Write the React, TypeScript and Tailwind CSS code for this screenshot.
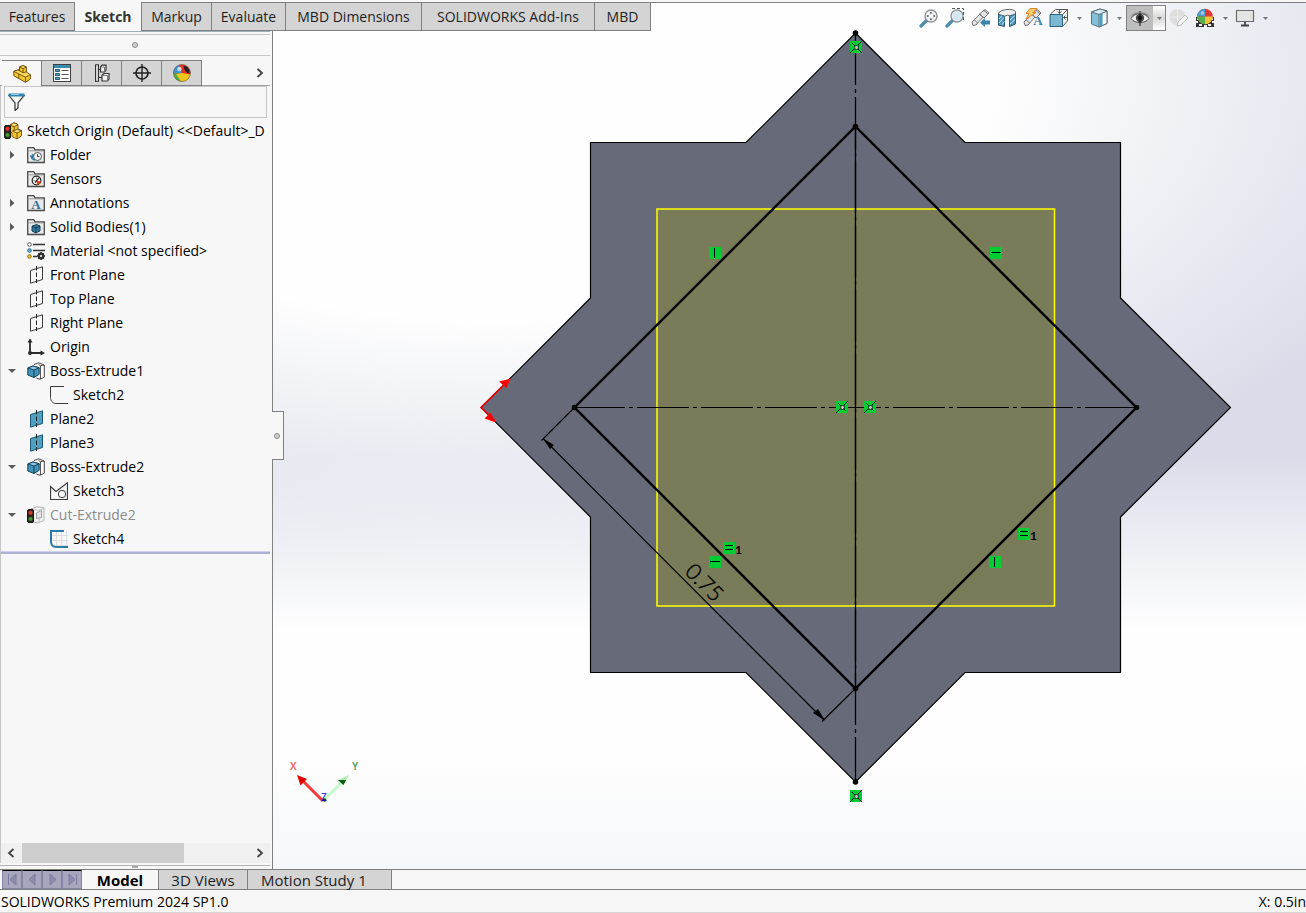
import React from 'react';
import clsx from 'clsx';

type IconProps = { children: React.ReactNode; size?: 18 | 20 };

function Icon({ children, size = 18 }: IconProps) {
  return (
    <svg
      width={size}
      height={size}
      viewBox={`0 0 ${size} ${size}`}
      fill="none"
      className="shrink-0"
      aria-hidden="true"
    >
      {children}
    </svg>
  );
}

/* ---------- Feature tree icons ---------- */

function TrafficLight() {
  return (
    <g>
      <rect x="0.5" y="3.5" width="6" height="13" rx="1.5" fill="#2b2320" stroke="#1c1714" />
      <circle cx="3.5" cy="6.8" r="2.1" fill="#e0352b" />
      <circle cx="3.5" cy="13" r="2.1" fill="#3f9a34" />
    </g>
  );
}

function PartIcon() {
  return (
    <Icon>
      <g stroke="#6b4a0c" strokeWidth="0.9" strokeLinejoin="round">
        <path d="M6.500 2 10 .6l3.400 1.500v6l4 1.700V14l-4.900 3.300L.8 10.800V6.400l5.700-2z" fill="#f2c62c" />
        <path d="M6.500 2 10 .6l3.400 1.500L10 3.600z" fill="#fde37c" />
        <path d="M.8 6.400 4.800 5l5.200 2.600 3.400-.6 4 2.800-4.900 2.400z" fill="#fbdc62" />
        <path d="M10 3.600v4M6.500 2v4M12.500 12.200v5M5.800 9v4.400" />
      </g>
    </Icon>
  );
}

function RootIcon() {
  return (
    <Icon>
      <g stroke="#6b4a0c" strokeWidth="0.9" strokeLinejoin="round">
        <path d="M6 3 10 .8l4 1.8v4.600l3.500 1.400v5.200L13 17l-5-2.400V11L6 9z" fill="#f2c62c" />
        <path d="M6 3 10 .8l4 1.800-3.800 2zM8.500 9l4.800-1.600 4.200 1.400L13 11z" fill="#fde37c" />
        <path d="M10.200 4.600V8.400M13 11v6" />
      </g>
      <TrafficLight />
    </Icon>
  );
}

function FolderBase({ children }: { children: React.ReactNode }) {
  return (
    <Icon>
      <path d="M.7 16.500V1.700h6l1.600 2.300h9v12.500z" fill="#e9e9e9" stroke="#4a4a4a" strokeWidth="1.300" />
      <path d="M1.500 4.800h15" stroke="#9a9a9a" />
      {children}
    </Icon>
  );
}

function HistoryFolderIcon() {
  return (
    <FolderBase>
      <circle cx="10.500" cy="10.500" r="4" fill="#f5f5f5" stroke="#555" />
      <path d="M10.500 8.200v2.500h2" stroke="#333" />
      <path d="M7.800 14.200C4.800 13 4.300 11 6 8.200" stroke="#2f7fa8" strokeWidth="1.600" />
      <path d="M2.500 9.600h4.800L4.900 13.200z" fill="#2f7fa8" />
    </FolderBase>
  );
}

function SensorsIcon() {
  return (
    <FolderBase>
      <circle cx="9.500" cy="10.500" r="4.300" fill="#fff" stroke="#222" strokeWidth="1.200" />
      <path d="M9.500 10.500 14 11.500A4.300 4.300 0 0 1 10 15z" fill="#e0441f" />
      <path d="M8 12.500 12 7.800" stroke="#222" strokeWidth="1.300" />
      <path d="M6.500 10.500h1M9.500 7.500v1" stroke="#444" />
    </FolderBase>
  );
}

function AnnotationsIcon() {
  return (
    <FolderBase>
      <text
        x="9"
        y="15"
        textAnchor="middle"
        fill="#2d7093"
        className="text-[13px] font-bold font-['Liberation_Serif',serif]"
      >
        A
      </text>
    </FolderBase>
  );
}

function SolidBodiesIcon() {
  return (
    <FolderBase>
      <path d="M5 8.200 9.500 6.500 13 8v4.800L8.800 15 5 13z" fill="#2d7ea5" stroke="#16394b" />
      <path d="m5 8.200 4 1.600L13 8M9 9.800V15" stroke="#16394b" />
    </FolderBase>
  );
}

function MaterialIcon() {
  return (
    <Icon>
      <path d="M6 2.500h12M6 8.500h12M6 14.500h4" stroke="#333" strokeWidth="1.600" />
      <circle cx="2.500" cy="2.500" r="1.800" fill="#fff" stroke="#555" />
      <circle cx="2.500" cy="8.500" r="1.800" fill="#5fb4dd" stroke="#27688c" />
      <circle cx="2.500" cy="14.500" r="1.800" fill="#f4c822" stroke="#8a6a12" />
      <circle cx="14" cy="14" r="2.300" stroke="#333" strokeWidth="2.400" fill="#f7f7f7" />
      <path d="M14 10v1.500M14 16.500V18M10 14h1.500M16.500 14H18M11.300 11.300l1 1M15.700 15.700l1 1M16.700 11.300l-1 1M12.300 15.700l-1 1" stroke="#333" strokeWidth="1.500" />
    </Icon>
  );
}

function PlaneIcon({ solid = false }: { solid?: boolean }) {
  return (
    <Icon>
      <path
        d="M3.500 4.500 15.500.8v12.700L3.500 17.200z"
        fill={solid ? '#4f9fc2' : '#f9f9f9'}
        stroke={solid ? '#1d5876' : '#3c3c3c'}
      />
      <path d="M9.500 0v4.500M9.500 6.500v4.500M9.500 13v4" stroke="#222" />
    </Icon>
  );
}

function OriginIcon() {
  return (
    <Icon>
      <path d="M3 15V3M3 15h12" stroke="#2b2b2b" strokeWidth="1.800" />
      <path d="M.5 4.500 3 .2l2.500 4.300zM13.500 12.500 18 15l-4.500 2.500z" fill="#2b2b2b" />
      <circle cx="3" cy="15" r="2" fill="#2b2b2b" />
    </Icon>
  );
}

function BossIcon() {
  return (
    <Icon>
      <path d="M7 2.500 11.500.8 17.300 3v12.200L13 17.300 9.500 16" fill="#fafafa" stroke="#444" />
      <path d="m11.500 2.500 2 1.200V17M13.500 3.700 17 3" stroke="#555" />
      <path d="M.8 6 6 4l6.200 1.800v6.500L7 15.500.8 13z" fill="#3f93b8" stroke="#17435a" />
      <path d="M.8 6 7 8l5.200-2.200L6 4z" fill="#8bc8e2" stroke="#17435a" />
      <path d="M7 8v7.500" stroke="#17435a" />
    </Icon>
  );
}

function CutIcon() {
  return (
    <Icon>
      <path d="M4 3 10 .8l7 .7v13L11 17l-6-1z" fill="#f1f1f1" stroke="#b4b4b4" />
      <path d="m5 3.500 7 1V16M12 4.500 17 2" stroke="#c4c4c4" />
      <path d="M9.500 7 14.500 4.500v7l-5 1z" fill="#e4e4e4" stroke="#a5a5a5" />
      <TrafficLight />
    </Icon>
  );
}

function SketchArcIcon() {
  return (
    <Icon>
      <path d="M14 .5H.5v11c0 3 2 6 5.500 6h12" stroke="#3c3c3c" />
    </Icon>
  );
}

function SketchShapeIcon() {
  return (
    <Icon>
      <path d="M.5 17.500V4.500l5.500 5L17.500.8v16.700z" stroke="#3c3c3c" strokeWidth="1.200" />
      <circle cx="12" cy="12" r="3.700" fill="#f7f7f7" stroke="#3c3c3c" />
    </Icon>
  );
}

function SketchGridIcon() {
  return (
    <Icon>
      <path d="M6.500 1v17M11.500 1v17M16.500 1v17M2 5.500h16M2 10.500h16M2 15.500h16" stroke="#dedede" />
      <path d="M14 1H1v10.500C1 15 3 17 6.500 17H18" stroke="#2b7ca5" strokeWidth="2" />
    </Icon>
  );
}

/* ---------- Manager tab icons ---------- */

function PropertyIcon() {
  return (
    <Icon>
      <rect x="0.500" y="0.500" width="17" height="17" fill="#fff" stroke="#3f3f3f" />
      <path d="M1 1h16v3H1z" fill="#3a8bb1" />
      <path d="M2.500 5.500h4v2h-4zM2.500 9.500h4v2h-4zM2.500 13.500h4v2h-4z" fill="#5ea9ca" stroke="#245a75" />
      <path d="M8.500 6.500h7M8.500 10.500h7M8.500 14.500h7" stroke="#555" />
    </Icon>
  );
}

function ConfigIcon() {
  return (
    <Icon>
      <path d="M2.500 1v16.500M5.500 1v16.500M2 .8h4M2 17.300h4M5.500 5.500H8M5.500 13.500H9" stroke="#333" />
      <path d="M7.500 3 9 1.200h4V6L11.500 8h-4zM9 11.500l2-2h5v5.500L14.500 17H9z" fill="#f4f4f4" stroke="#333" strokeWidth="1.200" />
      <path d="M7.500 3h4v5M9 11.500h5.500V17" stroke="#777" />
    </Icon>
  );
}

function TargetIcon() {
  return (
    <Icon>
      <circle cx="9" cy="9" r="6" stroke="#222" strokeWidth="1.700" />
      <path d="M9 0v18M0 9h18" stroke="#222" strokeWidth="1.400" />
    </Icon>
  );
}

function BallIcon() {
  return (
    <Icon>
      <circle cx="9" cy="9" r="8.500" fill="#e23024" />
      <path d="M9 9 6 1A8.500 8.500 0 0 0 .5 9.500z" fill="#4291d6" />
      <path d="M.5 9.500 9 9v8.500A8.500 8.500 0 0 1 .5 9.500z" fill="#4cae3a" />
      <path d="M3 10 9 9l8.500 1.500A8.500 8.500 0 0 1 8 17.500z" fill="#f3c61c" />
      <path d="M10.500 2C14 1.500 17 5 16.500 9.500 13.500 9 11 6 10.500 2z" fill="#222" />
      <circle cx="6.500" cy="5" r="2.200" fill="#fff" opacity="0.700" />
      <circle cx="9" cy="9" r="8.500" stroke="#6a5a4a" strokeWidth="0.600" />
    </Icon>
  );
}

function FilterIcon() {
  return (
    <Icon>
      <path d="M1 2.500 7 10v7.500l3-2.500v-5L16 2.500z" fill="#f7f7f7" stroke="#333" strokeWidth="1.200" />
      <path d="M.5.500h16v3H.5z" fill="#2f86ae" />
      <path d="M3 1.500h8" stroke="#8fcbe6" />
    </Icon>
  );
}

/* ---------- Heads-up toolbar icons ---------- */

function Lens({ children }: { children?: React.ReactNode }) {
  return (
    <g>
      <path d="M2 18 7.500 12.500" stroke="#4b8dad" strokeWidth="3.200" strokeLinecap="round" />
      <circle cx="12" cy="8" r="6" fill="#f6f9fb" stroke="#8b9298" strokeWidth="1.400" />
      {children}
    </g>
  );
}

function ZoomFitIcon() {
  return (
    <Icon size={20}>
      <Lens>
        <path d="m12 3.500 1.600 2h-3.200zM12 12.500l1.600-2h-3.200zM7.500 8l2-1.600v3.200zM16.500 8l-2-1.600v3.200z" fill="#4b4b4b" />
      </Lens>
    </Icon>
  );
}

function ZoomAreaIcon() {
  return (
    <Icon size={20}>
      <path d="M7 .5h11.500v12" stroke="#555" strokeDasharray="3 2" />
      <Lens>
        <circle cx="12" cy="8" r="4.800" fill="#d5e7f0" />
      </Lens>
    </Icon>
  );
}

function Scope() {
  return (
    <g stroke="#777" strokeLinejoin="round">
      <path d="m1 14 8-8 3 3-7 8-3 .5zM8.500 6 14 1.500l4 3.500-5 5z" fill="#e5e5e5" />
      <path d="m3.500 12 3 3M8.500 6l4.500 4M13 2.500l4 3.500" />
    </g>
  );
}

function PreviousViewIcon() {
  return (
    <Icon size={20}>
      <Scope />
      <path d="m9 14.500 5-4.500v2.500h5v4h-5V19z" fill="#3d86ab" />
    </Icon>
  );
}

function SectionIcon() {
  return (
    <Icon size={20}>
      <path d="M1.500 5C4 1 16 0 18.500 3.500V15l-5 3V8.500C12 7 9 7 7.500 8.500V18l-6-1z" fill="#ededed" stroke="#666" />
      <path d="M1.500 6.500 7.500 8v10.500l-6-1.500zM12.500 8l6-2v10l-6 2.500z" fill="#5298b9" stroke="#2e5e76" />
      <path d="m2 11 3-3.500M2 15l5-5.500M4.500 17l3-3.500M13 12l5-4.500M13 16l5-4.500" stroke="#bfe0ee" />
    </Icon>
  );
}

function DynamicAnnotationIcon() {
  return (
    <Icon size={20}>
      <Scope />
      <path d="M7 .5h7l-4 4h3L3 11l3-5.500H3z" fill="#f9cf6a" stroke="#e0862e" />
      <text
        x="15"
        y="17"
        textAnchor="middle"
        fill="#3b83a8"
        className="text-[13px] font-bold leading-none font-['Liberation_Serif',serif]"
      >
        A
      </text>
    </Icon>
  );
}

function OrientationIcon() {
  return (
    <Icon size={20}>
      <path d="M1.500 6 6.500 1.500h12V13l-5 5.500" fill="#f5f5f5" stroke="#555" />
      <path d="M1 6.500h12.500v12H1z" fill="#7ab8d3" stroke="#2a627e" />
      <path d="m13.500 6.500 5-5M10.500 1.500V5M8.500 3.500l2 2 2-2M15 9.500h3.500M16.500 7.500l-2 2 2 2" stroke="#555" />
    </Icon>
  );
}

function DisplayStyleIcon() {
  return (
    <Icon size={20}>
      <path d="M2.500 4 11 1l7 2v12.500L10 19l-7.500-3z" fill="#86c1db" stroke="#4f7587" />
      <path d="M10 6.500 18 3v12.500L10 19z" fill="#f3f7f9" stroke="#5b6c75" />
      <path d="M2.500 4 11 1l7 2-8 3.500z" fill="#d6ebf4" stroke="#5b6c75" />
      <path d="M13.500 5v12.500l-3 1V6.500z" fill="#4b9bbf" />
    </Icon>
  );
}

function EyeIcon() {
  return (
    <Icon size={20}>
      <path d="M1 10.500C5 4 15 4 19 10.500c-4 5.500-14 5.500-18 0z" fill="#f4f4f4" stroke="#555" />
      <circle cx="10" cy="10" r="4.200" fill="#4a4a4a" />
      <circle cx="10" cy="10" r="2.200" fill="#111" />
      <path d="M10 3v15" stroke="#111" />
      <path d="M1 8.500C5 3.500 15 3.500 19 8.500" stroke="#777" />
    </Icon>
  );
}

function EditAppearanceIcon() {
  return (
    <Icon size={20}>
      <circle cx="8.500" cy="9" r="8" fill="#dedede" />
      <path d="M8.500 1v16M.5 9h16" stroke="#ececec" />
      <path d="m8 18 1-4 7-7 3 3-7 7z" fill="#f6f6f6" stroke="#bdbdbd" />
    </Icon>
  );
}

function SceneIcon() {
  return (
    <Icon size={20}>
      <path d="M1 9h18v10H1z" fill="#333" />
      <path d="M2 10h3v2H2zM15 10h3v2h-3zM1 13h2v2H1zM17 13h2v2h-2zM4 16h3v2H4zM9 17h3v2H9zM13 16h3v2h-3z" fill="#f2f2f2" />
      <circle cx="10" cy="8.500" r="7.800" fill="#df3a35" />
      <path d="M10 8.500V.7A7.800 7.800 0 0 0 2.200 8.500z" fill="#4d9bd0" />
      <path d="M2.200 8.500H10v7.800a7.800 7.800 0 0 1-7.800-7.800z" fill="#55b04c" />
      <path d="M10 8.500h7.800a7.800 7.800 0 0 1-7.800 7.800z" fill="#f0c33a" />
      <circle cx="7.500" cy="5" r="1.800" fill="#fff" opacity="0.500" />
    </Icon>
  );
}

function MonitorIcon() {
  return (
    <Icon size={20}>
      <path d="M1.500 2.500h17v11h-17z" fill="#e4e4e4" stroke="#6a6a6a" strokeWidth="1.200" />
      <path d="M10 14v3M6 17.500h8" stroke="#444" strokeWidth="1.800" />
    </Icon>
  );
}

/* ---------- Data ---------- */

const ribbonTabs = [
  { label: 'Features', width: 'w-[75px]' },
  { label: 'Sketch', width: 'w-[67px]', active: true },
  { label: 'Markup', width: 'w-[70px]' },
  { label: 'Evaluate', width: 'w-[74px]' },
  { label: 'MBD Dimensions', width: 'w-[136px]' },
  { label: 'SOLIDWORKS Add-Ins', width: 'w-[173px]' },
  { label: 'MBD', width: 'w-[56px]' },
];

const managerTabs = [
  { label: 'FeatureManager', icon: <PartIcon /> },
  { label: 'PropertyManager', icon: <PropertyIcon /> },
  { label: 'ConfigurationManager', icon: <ConfigIcon /> },
  { label: 'DimXpertManager', icon: <TargetIcon /> },
  { label: 'DisplayManager', icon: <BallIcon /> },
];

type TreeItem = {
  label: string;
  icon: React.ReactNode;
  level: 1 | 2;
  state?: 'open' | 'closed';
  muted?: boolean;
};

const treeItems: TreeItem[] = [
  { label: 'Folder', icon: <HistoryFolderIcon />, level: 1, state: 'closed' },
  { label: 'Sensors', icon: <SensorsIcon />, level: 1 },
  { label: 'Annotations', icon: <AnnotationsIcon />, level: 1, state: 'closed' },
  { label: 'Solid Bodies(1)', icon: <SolidBodiesIcon />, level: 1, state: 'closed' },
  { label: 'Material <not specified>', icon: <MaterialIcon />, level: 1 },
  { label: 'Front Plane', icon: <PlaneIcon />, level: 1 },
  { label: 'Top Plane', icon: <PlaneIcon />, level: 1 },
  { label: 'Right Plane', icon: <PlaneIcon />, level: 1 },
  { label: 'Origin', icon: <OriginIcon />, level: 1 },
  { label: 'Boss-Extrude1', icon: <BossIcon />, level: 1, state: 'open' },
  { label: 'Sketch2', icon: <SketchArcIcon />, level: 2 },
  { label: 'Plane2', icon: <PlaneIcon solid />, level: 1 },
  { label: 'Plane3', icon: <PlaneIcon solid />, level: 1 },
  { label: 'Boss-Extrude2', icon: <BossIcon />, level: 1, state: 'open' },
  { label: 'Sketch3', icon: <SketchShapeIcon />, level: 2 },
  { label: 'Cut-Extrude2', icon: <CutIcon />, level: 1, state: 'open', muted: true },
  { label: 'Sketch4', icon: <SketchGridIcon />, level: 2 },
];

/* ---------- Header ---------- */

function ToolButton({ label, children }: { label: string; children: React.ReactNode }) {
  return (
    <button type="button" aria-label={label} className="flex h-[26px] w-[26px] items-center justify-center">
      {children}
    </button>
  );
}

function Caret() {
  return (
    <svg width="5" height="3" viewBox="0 0 5 3" aria-hidden="true">
      <path d="M0 0h5L2.500 3z" fill="#777" />
    </svg>
  );
}

function CaretButton({ label }: { label: string }) {
  return (
    <button type="button" aria-label={label} className="flex h-[26px] w-[14px] items-center justify-center">
      <Caret />
    </button>
  );
}

function Header() {
  return (
    <header className="flex h-[31px] shrink-0 bg-[linear-gradient(#f7f7f7_2px,transparent_2px)] pt-[2px]">
      <nav className="flex">
        {ribbonTabs.map((tab) => (
          <button
            key={tab.label}
            type="button"
            className={clsx(
              'flex items-center justify-center whitespace-nowrap border-r border-[#808080]',
              tab.width,
              tab.active
                ? 'bg-[#f7f7f7] font-bold text-[#333]'
                : 'border-y bg-[#d4d4d4] text-[#1e1e1e]',
            )}
          >
            {tab.label}
          </button>
        ))}
      </nav>
      <div className="flex flex-1 justify-end border-t border-[#808080] pr-[34px] pt-[2px]">
        <ToolButton label="Zoom to Fit"><ZoomFitIcon /></ToolButton>
        <ToolButton label="Zoom to Area"><ZoomAreaIcon /></ToolButton>
        <ToolButton label="Previous View"><PreviousViewIcon /></ToolButton>
        <ToolButton label="Section View"><SectionIcon /></ToolButton>
        <ToolButton label="Dynamic Annotation Views"><DynamicAnnotationIcon /></ToolButton>
        <ToolButton label="View Orientation"><OrientationIcon /></ToolButton>
        <CaretButton label="View Orientation options" />
        <ToolButton label="Display Style"><DisplayStyleIcon /></ToolButton>
        <CaretButton label="Display Style options" />
        <div className="flex h-[26px] border border-[#808080]">
          <button
            type="button"
            aria-label="Hide/Show Items"
            className="flex w-[26px] items-center justify-center bg-[#bebebe]"
          >
            <EyeIcon />
          </button>
          <button
            type="button"
            aria-label="Hide/Show options"
            className="flex w-[12px] items-center justify-center bg-linear-to-b from-white via-[#d8d8d8] to-white"
          >
            <Caret />
          </button>
        </div>
        <ToolButton label="Edit Appearance"><EditAppearanceIcon /></ToolButton>
        <ToolButton label="Apply Scene"><SceneIcon /></ToolButton>
        <CaretButton label="Apply Scene options" />
        <ToolButton label="View Settings"><MonitorIcon /></ToolButton>
        <CaretButton label="View Settings options" />
      </div>
    </header>
  );
}

/* ---------- Side panel ---------- */

function Grip() {
  return <span className="h-[6px] w-[6px] rounded-full border border-[#8c8c8c] bg-[#cfcfcf]" />;
}

function Chevron({ left = false }: { left?: boolean }) {
  return (
    <svg width="8" height="10" viewBox="0 0 8 10" fill="none" aria-hidden="true">
      <path d={left ? 'M6.500 1 2 5l4.500 4' : 'M1.500 1 6 5 1.500 9'} stroke="#444" strokeWidth="1.800" />
    </svg>
  );
}

function TreeRow({ item }: { item: TreeItem }) {
  return (
    <li className={clsx('flex h-6 items-center', item.level === 2 ? 'pl-[49px]' : 'pl-[7px]')}>
      {item.level === 1 && (
        <span className="flex w-[19px] shrink-0">
          {item.state && (
            <button type="button" aria-label={`Toggle ${item.label}`} aria-expanded={item.state === 'open'}>
              <svg width="8" height="8" viewBox="0 0 8 8" aria-hidden="true">
                <path d={item.state === 'open' ? 'M0 2h8L4 6z' : 'M2 0l4.500 4L2 8z'} fill="#5c5c5c" />
              </svg>
            </button>
          )}
        </span>
      )}
      {item.icon}
      <span className={clsx('whitespace-nowrap pl-[5px]', item.muted ? 'text-[#8c8c8c]' : 'text-black')}>
        {item.label}
      </span>
    </li>
  );
}

function SidePanel() {
  return (
    <aside className="relative flex w-[273px] shrink-0 flex-col border-r border-[#808080] bg-[#f7f7f7] pr-[2px]">
      <div className="flex h-[25px] flex-col border-b border-[#c6c6c6]">
        <div className="h-1 border-b border-t border-b-[#c6c6c6] border-t-[#9fb0b5]" />
        <div className="flex flex-1 items-center justify-center">
          <Grip />
        </div>
      </div>

      <div className="mt-1 flex h-[26px] items-stretch">
        <div className="w-[2px] border-b border-[#a0a0a0]" />
        {managerTabs.map((tab, index) => (
          <button
            key={tab.label}
            type="button"
            aria-label={tab.label}
            className={clsx(
              'flex w-10 items-center justify-center border-r border-t border-[#808080]',
              index !== 0 && 'border-b bg-[#d4d4d4]',
            )}
          >
            {tab.icon}
          </button>
        ))}
        <div className="flex flex-1 items-center justify-end border-b border-[#a0a0a0] pr-[6px]">
          <button type="button" aria-label="More tabs"><Chevron /></button>
        </div>
      </div>

      <div className="flex flex-1 flex-col border-l border-[#c6c6c6]">
        <label className="mx-[3px] flex h-8 items-center border border-[#c6c6c6] pl-[3px]">
          <FilterIcon />
          <input type="text" aria-label="Filter feature tree" className="min-w-0 flex-1 bg-transparent outline-none" />
        </label>

        <div className="flex-1 pt-px">
          <div className="flex h-6 items-center pl-[3px]">
            <RootIcon />
            <span className="whitespace-nowrap pl-[5px] text-black">
              Sketch Origin (Default) &lt;&lt;Default&gt;_D
            </span>
          </div>
          <ul>
            {treeItems.map((item) => (
              <TreeRow key={item.label} item={item} />
            ))}
          </ul>
          <div className="h-[3px] border-t border-[#d0d0e6] bg-[#b0b0d0]" />
        </div>

        <div className="flex h-5 items-center bg-[#f0f0f0]">
          <button type="button" aria-label="Scroll left" className="flex w-[21px] justify-center pr-[2px]"><Chevron left /></button>
          <div className="h-full flex-1">
            <div className="h-full w-[162px] bg-[#cdcdcd]" />
          </div>
          <button type="button" aria-label="Scroll right" className="flex w-[21px] justify-center"><Chevron /></button>
        </div>
      </div>
      <div className="mt-[2px] flex h-1 justify-center border-t border-[#b4b4b4]">
        <div className="h-[2px] w-[6px] bg-[#a8a8a8]" />
      </div>

      <button
        type="button"
        aria-label="Collapse panel"
        className="absolute -right-[12px] top-[380px] flex h-[49px] w-[12px] items-center border border-l-0 border-[#808080] bg-[#f7f7f7] pl-[2px]"
      >
        <Grip />
      </button>
    </aside>
  );
}

/* ---------- Graphics area ---------- */

type RelationKind = 'vertical' | 'horizontal' | 'equal' | 'coincident' | 'midpoint';

const relations: { x: number; y: number; kind: RelationKind }[] = [
  { x: 850, y: 41, kind: 'coincident' },
  { x: 850, y: 790, kind: 'coincident' },
  { x: 836, y: 401, kind: 'midpoint' },
  { x: 864, y: 401, kind: 'midpoint' },
  { x: 709, y: 247, kind: 'vertical' },
  { x: 990, y: 247, kind: 'horizontal' },
  { x: 723, y: 542, kind: 'equal' },
  { x: 709, y: 556, kind: 'horizontal' },
  { x: 1018, y: 528, kind: 'equal' },
  { x: 989, y: 556, kind: 'vertical' },
];

function Relation({ x, y, kind }: { x: number; y: number; kind: RelationKind }) {
  return (
    <g transform={`translate(${x} ${y})`}>
      <rect width="12" height="12" fill="#00cc33" />
      <g stroke="#000" fill="none">
        {kind === 'vertical' && <path d="M5.500 1v10" />}
        {kind === 'horizontal' && <path d="M1 5.500h10" />}
        {kind === 'equal' && <path d="M2 3.500h8M2 7.500h8" />}
        {kind === 'coincident' && <path d="M2 2l3 3M12 0 8 4M0 12l4-4M12 12l-4-4" />}
        {kind === 'midpoint' && <path d="M12 0 8 4M4 8l-4 4M2.500 2.500l2 2M7.500 7.500l2 2" />}
        {(kind === 'coincident' || kind === 'midpoint') && (
          <>
            <rect x="4.500" y="4.500" width="4" height="4" strokeDasharray="1 1" />
            <path d="M5 6.500h3M6.500 5v3" stroke="#d9b0d8" />
          </>
        )}
      </g>
      {kind === 'equal' && (
        <text x="12" y="12" className="text-[12px] font-bold font-[Lato,sans-serif]">1</text>
      )}
    </g>
  );
}

function Triad() {
  return (
    <g>
      <path d="M323 801 302 780" stroke="#f23a3a" strokeWidth="3" />
      <path d="M297 775l3.500 10.500 6.500-6.500z" fill="#e00000" />
      <path d="M324 800 341 783" stroke="#c4fbc8" strokeWidth="3" />
      <path d="M349 775l-6 10.500-5-5.500z" fill="#a8f0a8" />
      <path d="M338 780h8l-2.500 5z" fill="#075c12" />
      <circle cx="324.500" cy="800" r="1.800" fill="#0a4a12" />
      <g className="text-[10px] font-['Open_Sans',sans-serif]">
        <text x="290" y="770" fill="#f47070" className="font-bold">X</text>
        <text x="352" y="770" fill="#67a867" className="font-bold">Y</text>
        <text x="321" y="801" fill="#1010d8">Z</text>
      </g>
    </g>
  );
}

function GraphicsArea() {
  return (
    <main className="min-w-0 flex-1">
      <svg viewBox="273 31 1033 838" className="h-full w-full overflow-visible" role="img" aria-label="Sketch4 on part">
        <path
          d="M855.500 33 965 142.500h155.500V298L1230.500 407.500 1120.500 517v155.500H965L855.500 782 746 672.500H590.500V517L481 407.500 590.500 298V142.500H746z"
          fill="#676a79"
          stroke="#000"
          strokeWidth="1.200"
        />
        <rect x="657" y="209" width="397.500" height="397" fill="#7a7c59" stroke="#ffff00" strokeWidth="1.500" />

        {/* Centerlines */}
        <path d="M573 407.500h564" stroke="#000" strokeDasharray="52 4 4 4" />
        <path d="M855.500 33v749" stroke="#000" strokeWidth="1.300" strokeDasharray="52 4 4 4" />
        <path d="M855.500 126v563" stroke="#000" strokeWidth="1.300" />

        <path d="M855.500 126.500 1136.500 407.500 855.500 688.500 574.500 407.500z" fill="none" stroke="#000" strokeWidth="2.400" />
        {[[855.5, 33], [855.5, 782], [855.5, 126.5], [855.5, 688.5], [574.5, 407.5], [1136.5, 407.5]].map(([cx, cy]) => (
          <circle key={`${cx}-${cy}`} cx={cx} cy={cy} r="2.800" />
        ))}

        {/* 0.75 dimension */}
        <path d="M574 408 541.500 440.500M855 689 822 721.500M543 438.500 824 720" fill="none" stroke="#000" strokeWidth="1.100" />
        <path d="M543 438.500 554 445l-4 4zM825 720.500 818 709l-5 4z" />
        <text
          transform="translate(699 588) rotate(45)"
          textAnchor="middle"
          stroke="#000"
          strokeWidth="0.400"
          className="text-[22px] font-light font-[Lato,'Open_Sans',sans-serif]"
        >
          0.75
        </text>

        {relations.map((relation) => (
          <Relation key={`${relation.x}-${relation.y}`} {...relation} />
        ))}

        {/* Sketch origin */}
        <path d="M510 379 481 407.500 495 421" fill="none" stroke="#ff0000" strokeWidth="1.500" />
        <path d="M510.500 378.500 506.500 388l-7.500-6.500zM496 422.500l-11.500-4 6-6z" fill="#ff0000" />

        <Triad />
      </svg>
    </main>
  );
}

/* ---------- Footer ---------- */

const playback = [
  { label: 'First tab', path: 'M4.500 3v11M12 3v11L6 8.500z' },
  { label: 'Previous tab', path: 'M11 3v11L5 8.500z' },
  { label: 'Next tab', path: 'M6 3v11l6-5.500z' },
  { label: 'Last tab', path: 'M5 3v11l6-5.500zM12.500 3v11' },
];

function Footer() {
  return (
    <footer className="shrink-0 bg-[#f7f7f7] text-black">
      <div className="flex h-[21px] border-y border-[#808080] pl-[2px] text-[15px]">
        {playback.map((item) => (
          <button
            key={item.label}
            type="button"
            aria-label={item.label}
            className="flex w-5 items-center justify-center border border-t-black border-[#8484a4] bg-[#a6a6be]"
          >
            <svg width="17" height="17" viewBox="0 0 17 17" aria-hidden="true">
              <path d={item.path} fill="#8c8cac" stroke="#7c7c9c" />
            </svg>
          </button>
        ))}
        <button type="button" className="flex w-[77px] items-center justify-center border-r border-[#808080] font-bold">Model</button>
        <button type="button" className="flex w-[89px] items-center justify-center border-r border-[#808080] bg-[#d4d4d4] text-[#1e1e1e]">3D Views</button>
        <button type="button" className="flex w-[144px] items-center border-r border-[#808080] bg-[#d4d4d4] pl-[13px] text-[#1e1e1e]">Motion Study 1</button>
      </div>
      <div className="flex h-[23px] items-center justify-between whitespace-nowrap border-b border-[#d6d6d6] pl-px pt-[2px]">
        <span>SOLIDWORKS Premium 2024 SP1.0</span>
        <span>X: 0.5in</span>
      </div>
    </footer>
  );
}

export default function App() {
  return (
    <div className="flex min-h-screen flex-col bg-[linear-gradient(to_bottom,transparent_50%,rgba(255,255,255,0.55)_60%,#fefefe_69%,#fefefe_83%,#f6f7fa_96%),radial-gradient(ellipse_76%_54%_at_38%_8%,#fefefe_50%,#dadde9_100%)] font-['Open_Sans','Noto_Sans',sans-serif] text-[14px] leading-5">
      <Header />
      <div className="flex flex-1 items-stretch">
        <SidePanel />
        <GraphicsArea />
      </div>
      <Footer />
    </div>
  );
}
